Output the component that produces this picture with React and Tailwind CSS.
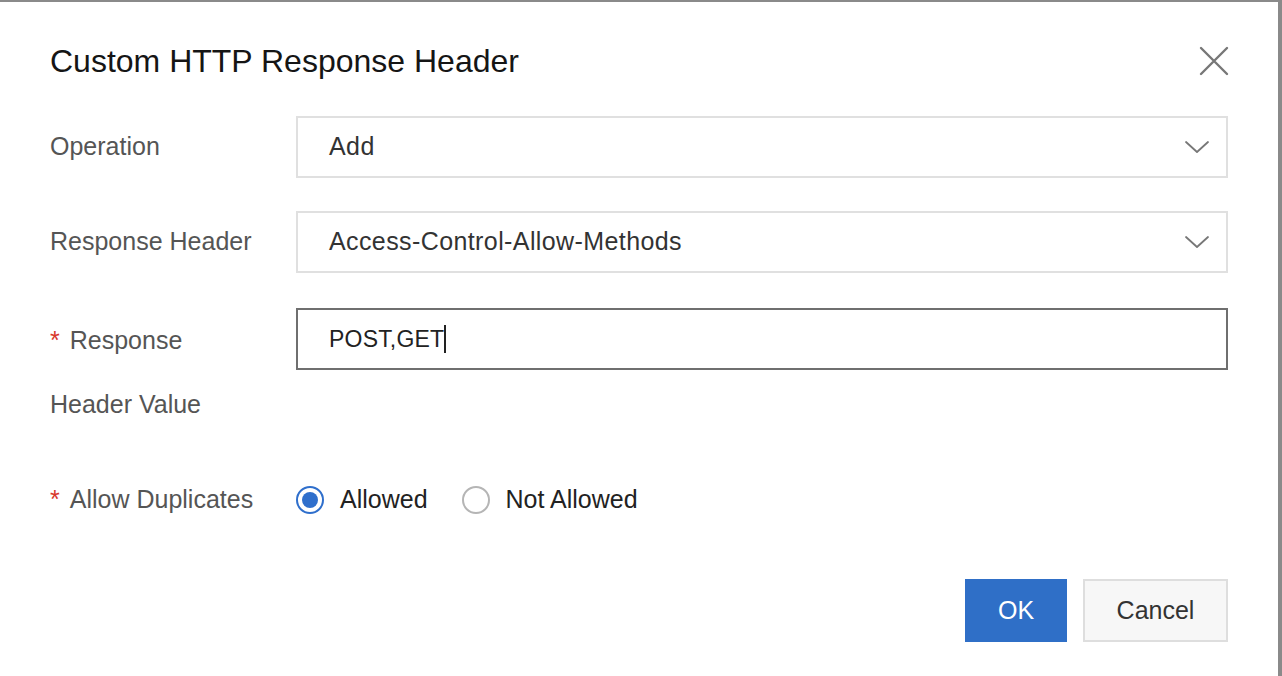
import { useState } from "react";

function Chevron() {
  return (
    <svg width="26" height="26" viewBox="0 0 26 26" fill="none" stroke="#777" strokeWidth="1.8" strokeLinecap="round" strokeLinejoin="round">
      <path d="M2 8l11 10 11-10" />
    </svg>
  );
}

function Select({ value }) {
  return (
    <div className="flex-1 h-[62px] flex items-center justify-between border-2 border-[#e0e0e0] bg-white pl-[31px] pr-[16px] text-[25px] tracking-[0.4px] text-[#333]">
      <span>{value}</span>
      <Chevron />
    </div>
  );
}

function Radio({ checked, label, onClick }) {
  return (
    <button type="button" onClick={onClick} className="flex items-center gap-[16px]">
      {checked ? (
        <span className="w-[28px] h-[28px] rounded-full border-2 border-[#2f6fcc] flex items-center justify-center">
          <span className="w-[16px] h-[16px] rounded-full bg-[#2f6fcc]" />
        </span>
      ) : (
        <span className="w-[28px] h-[28px] rounded-full border-2 border-[#b5b5b5]" />
      )}
      <span className="text-[25px] text-[#222]">{label}</span>
    </button>
  );
}

export default function App() {
  const [allow, setAllow] = useState(true);
  const [value, setValue] = useState("POST,GET");

  return (
    <div className="w-[1282px] h-[676px] flex bg-white font-['Liberation_Sans',Arial,sans-serif]">
      <div className="flex-1 border-t-2 border-[#8a8a8a] pl-[50px] pr-[50px] pt-[41px]">
        <div className="flex items-center justify-between">
          <h1 className="text-[32px] leading-[36px] text-[#151515]">Custom HTTP Response Header</h1>
          <svg width="30" height="30" viewBox="0 0 30 30" stroke="#777" strokeWidth="2.4" strokeLinecap="round" className="mr-[-1px]">
            <path d="M2 2l26 26M28 2L2 28" />
          </svg>
        </div>

        <div className="mt-[37px] flex items-center">
          <div className="w-[246px] text-[25px] text-[#555]">Operation</div>
          <Select value="Add" />
        </div>

        <div className="mt-[33px] flex items-center">
          <div className="w-[246px] text-[25px] text-[#555]">Response Header</div>
          <Select value="Access-Control-Allow-Methods" />
        </div>

        <div className="mt-[35px] flex items-start">
          <div className="w-[246px] text-[25px] leading-[64px] text-[#555]">
            <div>
              <span className="text-[#d8382c] mr-[10px]">*</span>Response
            </div>
            <div>Header Value</div>
          </div>
          <div className="flex-1 h-[62px] flex items-center border-2 border-[#6f6f6f] bg-white pl-[31px]">
            <input
              value={value}
              onChange={(e) => setValue(e.target.value)}
              className="w-[118px] text-[23px] tracking-[0.2px] text-[#222] outline-none bg-transparent"
            />
            <span className="ml-[-3px] w-[2px] h-[28px] bg-[#222]" />
          </div>
        </div>

        <div className="mt-[33px] h-[62px] flex items-center">
          <div className="w-[246px] text-[25px] text-[#555]">
            <span className="text-[#d8382c] mr-[10px]">*</span>Allow Duplicates
          </div>
          <div className="flex items-center gap-[34px]">
            <Radio checked={allow} label="Allowed" onClick={() => setAllow(true)} />
            <Radio checked={!allow} label="Not Allowed" onClick={() => setAllow(false)} />
          </div>
        </div>

        <div className="mt-[48px] flex justify-end gap-[16px]">
          <button type="button" className="w-[102px] h-[63px] bg-[#2f6fc7] text-white text-[25px]">
            OK
          </button>
          <button type="button" className="w-[145px] h-[63px] bg-[#f7f7f7] border-2 border-[#dedede] text-[#333] text-[25px]">
            Cancel
          </button>
        </div>
      </div>
      <div className="w-[4px] bg-[#8a8a8a]" />
    </div>
  );
}
